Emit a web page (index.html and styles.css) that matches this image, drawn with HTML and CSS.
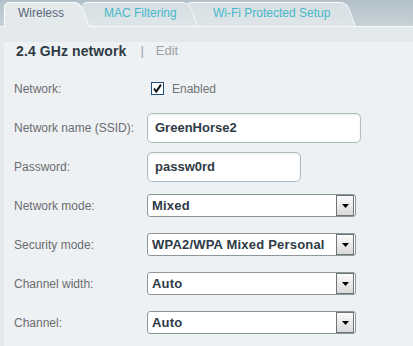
FILE: index.html
```html
<!DOCTYPE html>
<html>
<head>
<meta charset="utf-8">
<link rel="stylesheet" href="styles.css">
</head>
<body>
<div class="header">
  <div class="tabs">
    <div class="tab active">Wireless</div>
    <div class="tab t2">MAC Filtering</div>
    <div class="tab t3">Wi-Fi Protected Setup</div>
  </div>
</div>
<div class="frame">
  <div class="panel">
    <div class="title"><span class="name">2.4 GHz network</span><span class="sep">|</span><span class="edit">Edit</span></div>
    <div class="row">
      <div class="label">Network:</div>
      <div class="check">
        <svg class="cb" width="13" height="13" viewBox="0 0 13 13">
          <rect x="0.5" y="0.5" width="12" height="12" fill="#fff" stroke="#1f4e79"/>
          <path d="M3 6.5 L5.3 9.5 L10 2.6" fill="none" stroke="#111" stroke-width="2"/>
        </svg>
        <span class="check-label">Enabled</span>
      </div>
    </div>
    <div class="row">
      <div class="label">Network name (SSID):</div>
      <input class="text ssid" type="text" value="GreenHorse2">
    </div>
    <div class="row">
      <div class="label">Password:</div>
      <input class="text pass" type="text" value="passw0rd">
    </div>
    <div class="row">
      <div class="label">Network mode:</div>
      <div class="select"><span class="value">Mixed</span><span class="arrow"><svg width="7" height="4" viewBox="0 0 7 4"><path d="M0 0H7L3.5 4Z" fill="#000"/></svg></span></div>
    </div>
    <div class="row">
      <div class="label">Security mode:</div>
      <div class="select"><span class="value">WPA2/WPA Mixed Personal</span><span class="arrow"><svg width="7" height="4" viewBox="0 0 7 4"><path d="M0 0H7L3.5 4Z" fill="#000"/></svg></span></div>
    </div>
    <div class="row">
      <div class="label">Channel width:</div>
      <div class="select"><span class="value">Auto</span><span class="arrow"><svg width="7" height="4" viewBox="0 0 7 4"><path d="M0 0H7L3.5 4Z" fill="#000"/></svg></span></div>
    </div>
    <div class="row">
      <div class="label">Channel:</div>
      <div class="select"><span class="value">Auto</span><span class="arrow"><svg width="7" height="4" viewBox="0 0 7 4"><path d="M0 0H7L3.5 4Z" fill="#000"/></svg></span></div>
    </div>
  </div>
</div>
</body>
</html>
```
FILE: styles.css
```css
html, body {
  margin: 0;
  padding: 0;
}
body {
  width: 413px;
  height: 346px;
  overflow: hidden;
  font-family: "Liberation Sans", Arial, sans-serif;
  background: #eef1f3;
}
.header {
  position: relative;
  z-index: 2;
  height: 26px;
  background: linear-gradient(#b2c1c9, #c7d2d7);
}
.tabs {
  display: flex;
  align-items: flex-start;
  padding-top: 2px;
  padding-left: 4px;
}
.tab {
  position: relative;
  box-sizing: border-box;
  height: 24px;
  line-height: 23px;
  font-size: 12px;
  color: #45b8c9;
  white-space: nowrap;
  --bg: linear-gradient(#d6dfe3, #dfe6e9);
}
.tab::before,
.tab::after {
  content: "";
  position: absolute;
  top: 0;
  bottom: 0;
  z-index: -1;
  background: var(--bg);
  border: 0 solid rgba(255, 255, 255, 0.85);
}
.tab::before {
  left: 0;
  right: 14px;
  border-radius: 5px 0 0 0;
  border-width: 1px 0 0 0;
}
.tab::after {
  right: 0;
  width: 30px;
  border-radius: 0 7px 0 0;
  border-width: 1px 1px 0 0;
  transform: skewX(20deg);
  transform-origin: 100% 100%;
}
.tab.active {
  z-index: 3;
  width: 86px;
  height: 25px;
  padding-left: 14px;
  color: #5a6679;
  --bg: #e4eaec;
}
.tab.active::before {
  border-width: 1px 0 0 1px;
}
.tab.t2 {
  z-index: 2;
  width: 116px;
  margin-left: -8px;
  padding-left: 22px;
}
.tab.t3 {
  z-index: 1;
  width: 170px;
  margin-left: -12px;
  padding-left: 27px;
}
.frame {
  position: relative;
  z-index: 1;
  background: #e3e9ec;
  border-top: 1px solid #f6f8f9;
  padding-top: 15px;
  padding-left: 4px;
}
.panel {
  background: #eef1f3;
  height: 304px;
  padding-left: 10px;
}
.title {
  display: flex;
  align-items: flex-start;
  height: 27px;
  box-sizing: border-box;
  padding-top: 1px;
  padding-left: 2px;
  line-height: 16px;
}
.name {
  font-size: 14px;
  font-weight: bold;
  color: #2f3b46;
  letter-spacing: 0.1px;
}
.sep {
  font-size: 13px;
  color: #9aa3a8;
  margin-left: 14px;
}
.edit {
  font-size: 13px;
  color: #9a9fa3;
  margin-left: 12px;
}
.row {
  display: flex;
  align-items: center;
  height: 39px;
}
.label {
  width: 133px;
  flex: none;
  font-size: 12px;
  color: #6a6d70;
}
.check {
  display: flex;
  align-items: center;
  padding-left: 4px;
}
.cb {
  display: block;
}
.check-label {
  margin-left: 8px;
  font-size: 12px;
  color: #707478;
}
.text {
  box-sizing: border-box;
  height: 30px;
  margin: 0;
  padding: 0 7px;
  border: 1px solid #aebbc0;
  border-radius: 5px;
  background: #fff;
  box-shadow: inset 0 1px 2px rgba(0, 0, 0, 0.08);
  font-family: "Liberation Sans", Arial, sans-serif;
  font-size: 13px;
  font-weight: bold;
  color: #2e3a46;
  outline: none;
}
.ssid {
  width: 214px;
}
.pass {
  width: 154px;
}
.select {
  box-sizing: border-box;
  display: flex;
  align-items: center;
  width: 209px;
  height: 23px;
  border: 1px solid #8e979b;
  border-radius: 3px;
  background: #fff;
  padding-left: 4px;
  padding-right: 1px;
}
.value {
  flex: 1;
  font-size: 13px;
  font-weight: bold;
  color: #2e3a46;
  white-space: nowrap;
  letter-spacing: 0.2px;
}
.arrow {
  box-sizing: border-box;
  display: flex;
  align-items: center;
  justify-content: center;
  width: 18px;
  height: 21px;
  border: 1px solid #6f7477;
  background: linear-gradient(#fbfbfb, #d9d9d9);
}
.arrow svg {
  display: block;
}
```
